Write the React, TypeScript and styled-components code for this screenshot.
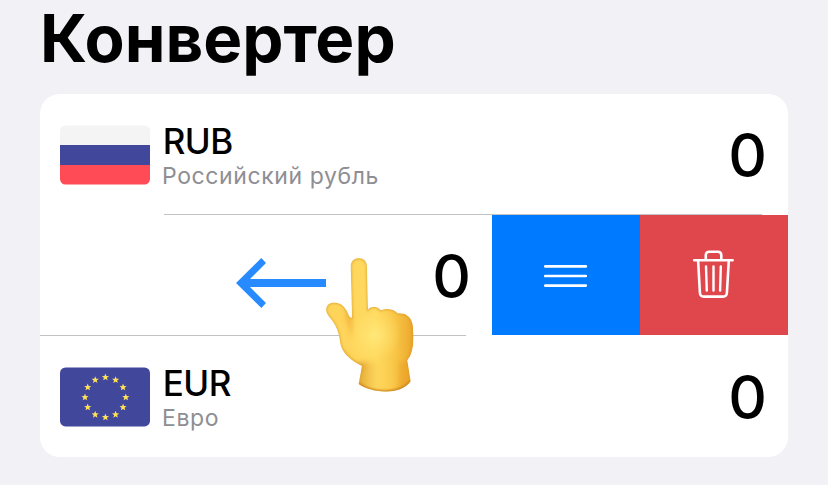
import React from "react";
import styled, { createGlobalStyle } from "styled-components";

const GlobalStyle = createGlobalStyle`
  * { box-sizing: border-box; }
  body {
    margin: 0;
    background: #f2f1f6;
    color: #000;
    font-family: Inter, "Liberation Sans", sans-serif;
    overflow: hidden;
  }
  svg { display: block; }
`;

const Screen = styled.main`
  position: relative;
  width: 828px;
  height: 485px;
  padding: 0 40px;
  background: #f2f1f6;
`;

const Title = styled.h1`
  margin: 0;
  height: 94px;
  font-size: 65.5px;
  font-weight: 700;
  line-height: 78px;
  letter-spacing: 0;
`;

const Card = styled.section`
  height: 363px;
  border-radius: 20px;
  background: #fff;
  overflow: hidden;
`;

const Row = styled.div`
  display: flex;
  flex-direction: column;
  height: 121px;
`;

const RowBody = styled.div`
  display: flex;
  align-items: center;
  height: 120px;
  padding: 2px 21px 0 20px;
`;

const SwipedBody = styled.div`
  display: flex;
  align-items: stretch;
  height: 120px;
`;

const SwipedContent = styled.div`
  display: flex;
  flex: 1;
  align-items: center;
  justify-content: flex-end;
  padding: 2px 21px 0 0;
`;

const Divider = styled.div<{ $start: number; $end: number }>`
  height: 1px;
  margin-left: ${(p) => p.$start}px;
  margin-right: ${(p) => p.$end}px;
  background: #c2c2c4;
`;

const Labels = styled.div`
  display: flex;
  flex: 1;
  flex-direction: column;
  margin-left: 12px;
  padding-top: 4px;
`;

const Code = styled.div`
  padding-left: 0.7px;
  font-size: 35px;
  font-weight: 500;
  line-height: 37px;
  letter-spacing: -0.5px;
`;

const Name = styled.div`
  color: #8e8e93;
  font-size: 23px;
  line-height: 32px;
  letter-spacing: 0.6px;
`;

const Amount = styled.div`
  font-size: 60px;
  font-weight: 500;
  line-height: 60px;
`;

const Action = styled.button<{ $color: string; $nudge: number }>`
  display: flex;
  align-items: center;
  justify-content: center;
  width: 148px;
  padding: ${(p) => (p.$nudge > 0 ? p.$nudge : 0)}px 0 ${(p) => (p.$nudge < 0 ? -p.$nudge : 0)}px;
  border: 0;
  background: ${(p) => p.$color};
`;

const ArrowOverlay = styled.div`
  position: absolute;
  left: 220px;
  top: 240px;
`;

const HandOverlay = styled.div`
  position: absolute;
  left: 318px;
  top: 250px;
`;

const RussianFlag = () => (
  <svg width="90" height="60" viewBox="0 0 90 60">
    <clipPath id="ru"><rect y="0.5" width="90" height="59" rx="5.5" /></clipPath>
    <g clipPath="url(#ru)">
      <path fill="#f4f4f4" d="M0 0h90v20H0z" />
      <path fill="#41479b" d="M0 20h90v20H0z" />
      <path fill="#ff4b55" d="M0 40h90v20H0z" />
    </g>
  </svg>
);

const starPoints = (cx: number, cy: number, r: number) =>
  Array.from({ length: 10 }, (_, i) => {
    const radius = i % 2 ? r * 0.42 : r;
    const a = (Math.PI / 5) * i - Math.PI / 2;
    return `${(cx + radius * Math.cos(a)).toFixed(2)},${(cy + radius * Math.sin(a)).toFixed(2)}`;
  }).join(" ");

const EuropeanFlag = () => (
  <svg width="90" height="60" viewBox="0 0 90 60">
    <rect y="0.4" width="90" height="59" rx="5.5" fill="#41479b" />
    {Array.from({ length: 12 }, (_, i) => {
      const a = (Math.PI / 6) * i;
      return (
        <polygon
          key={i}
          fill="#ffe15a"
          points={starPoints(45.4 + 20.4 * Math.sin(a), 30.3 - 20 * Math.cos(a), 3.8)}
        />
      );
    })}
  </svg>
);

const ReorderIcon = () => (
  <svg width="44" height="24" viewBox="0 0 44 24" stroke="#fff" strokeWidth="2.7" strokeLinecap="round">
    <path d="M1.3 2.4H41.8M1.3 12H41.8M1.3 21.6H41.8" />
  </svg>
);

const TrashIcon = () => (
  <svg
    width="42"
    height="50"
    viewBox="0 0 42 50"
    fill="none"
    stroke="#fff"
    strokeWidth="2.6"
    strokeLinecap="round"
    strokeLinejoin="round"
  >
    <path d="M1.2 11.2H39.6" />
    <path d="M12.8 10.8V6.3Q12.8 2.8 16.3 2.8H24.8Q28.3 2.8 28.3 6.3V10.8" />
    <path d="M5.1 11.5L6.9 43.7Q7.1 47.6 10.9 47.6H29.9Q33.7 47.6 33.9 43.7L35.8 11.5" />
    <path strokeWidth="2.4" d="M13 17.4L13.8 41.6M20.5 17.4V41.6M27.8 17.4L27.1 41.6" />
  </svg>
);

const SwipeArrow = () => (
  <svg width="110" height="72" viewBox="0 0 330 216">
    <path
      fill="#278bff"
      d="M48 129L124 54L138 69L90 117H318V141H90L138 189L124 204Z"
    />
  </svg>
);

const PointingHand = () => {
  const outline =
    "M98 49C98 16 147 16 147 49L150 179C158 168 177 167 189 181C203 173 229 176 239 190C263 187 283 201 285 230C288 263 287 291 279 312Q276 322 268 331L278 394C246 438 163 430 122 402L132 348C102 334 73 311 67 282C62 247 59 231 31 197C20 184 22 161 43 158C64 155 80 168 87 184C92 194 94 205 102 203Z";
  return (
    <svg width="110" height="150" viewBox="0 0 330 450">
      <defs>
        <clipPath id="hand"><path d={outline} /></clipPath>
        <linearGradient id="skin" gradientUnits="userSpaceOnUse" x1="60" y1="0" x2="288" y2="0">
          <stop offset="0" stopColor="#fed45b" />
          <stop offset="0.5" stopColor="#ffda60" />
          <stop offset="0.75" stopColor="#f8c647" />
          <stop offset="1" stopColor="#eba52a" />
        </linearGradient>
        <radialGradient id="glow" gradientUnits="userSpaceOnUse" cx="170" cy="255" r="80">
          <stop offset="0" stopColor="#ffe878" />
          <stop offset="1" stopColor="#ffe06b" stopOpacity="0" />
        </radialGradient>
        <linearGradient id="wrist" gradientUnits="userSpaceOnUse" x1="122" y1="0" x2="190" y2="0">
          <stop offset="0" stopColor="#d39123" stopOpacity="0.7" />
          <stop offset="1" stopColor="#f5bd45" stopOpacity="0" />
        </linearGradient>
        <filter id="soft" x="-30%" y="-30%" width="160%" height="160%">
          <feGaussianBlur stdDeviation="8" />
        </filter>
        <filter id="edge" x="-10%" y="-10%" width="120%" height="120%">
          <feGaussianBlur stdDeviation="2.5" />
        </filter>
      </defs>
      <g clipPath="url(#hand)">
        <path d={outline} fill="url(#skin)" />
        <circle cx="170" cy="255" r="80" fill="url(#glow)" />
        <path d="M75 180L102 205V268Q93 232 75 180" fill="#efa42b" opacity="0.65" filter="url(#soft)" />
        <path d="M125 335H215V450H110Z" fill="url(#wrist)" filter="url(#soft)" />
        <path d="M240 338Q259 340 267 329L280 410L235 430Q251 385 240 338" fill="#e99a24" opacity="0.45" filter="url(#soft)" />
        <path d="M70 300Q93 341 137 353" fill="none" stroke="#e39b27" strokeWidth="12" opacity="0.45" filter="url(#soft)" />
        <path d={outline} fill="none" stroke="#d8982b" strokeWidth="5" opacity="0.8" filter="url(#edge)" />
        <path d="M122 402C163 430 246 438 278 394" fill="none" stroke="#c77e1d" strokeWidth="6" filter="url(#edge)" />
      </g>
    </svg>
  );
};

interface CurrencyProps {
  code: string;
  name: string;
  flag: React.ReactNode;
}

const Currency = ({ code, name, flag }: CurrencyProps) => (
  <RowBody>
    {flag}
    <Labels>
      <Code>{code}</Code>
      <Name>{name}</Name>
    </Labels>
    <Amount>0</Amount>
  </RowBody>
);

export default function App() {
  return (
    <Screen>
      <GlobalStyle />
      <Title>Конвертер</Title>
      <Card>
        <Row>
          <Currency code="RUB" name="Российский рубль" flag={<RussianFlag />} />
          <Divider $start={124} $end={26} />
        </Row>
        <Row>
          <SwipedBody>
            <SwipedContent>
              <Amount>0</Amount>
            </SwipedContent>
            <Action $color="#007aff" $nudge={2} aria-label="Переместить"><ReorderIcon /></Action>
            <Action $color="#df474c" $nudge={-2} aria-label="Удалить"><TrashIcon /></Action>
          </SwipedBody>
          <Divider $start={0} $end={322} />
        </Row>
        <Row>
          <Currency code="EUR" name="Евро" flag={<EuropeanFlag />} />
        </Row>
      </Card>
      <ArrowOverlay><SwipeArrow /></ArrowOverlay>
      <HandOverlay><PointingHand /></HandOverlay>
    </Screen>
  );
}
